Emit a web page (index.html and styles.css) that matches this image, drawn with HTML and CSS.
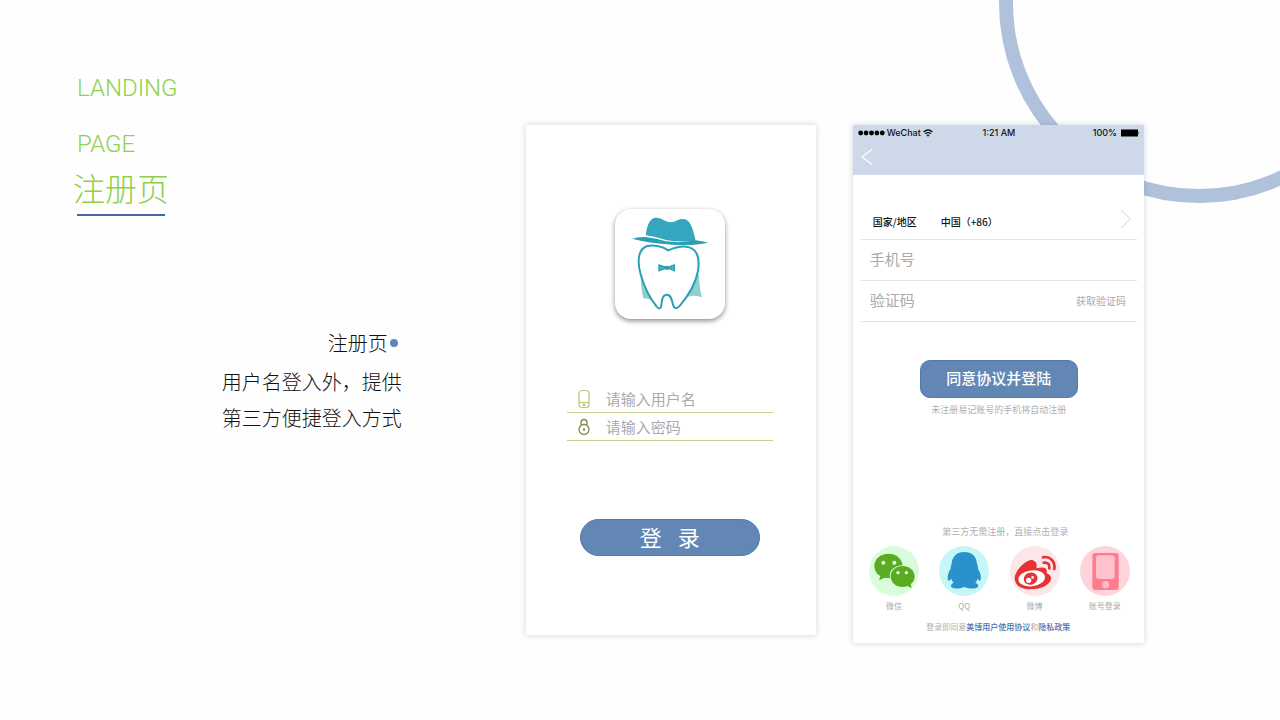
FILE: index.html
```html
<!DOCTYPE html>
<html lang="zh-CN">
<head>
    <meta charset="UTF-8">
    <meta name="viewport" content="width=device-width, initial-scale=1.0">
    <title>注册页</title>
    <link rel="stylesheet" href="styles.css">
</head>

<body>
    <div class="page">
        <div class="ring"></div>

        <section class="intro">
            <h1>LANDING<br>PAGE</h1>
            <h2>注册页</h2>
            <div class="desc">
                <h3>注册页<span class="dot"></span></h3>
                <p>用户名登入外，提供<br>第三方便捷登入方式</p>
            </div>
        </section>

        <main class="card login">
            <div class="logo">
                <svg viewBox="45 42 330 330" width="110" height="110" aria-hidden="true">
                    <path fill="#8fcfd0" d="M122 242C122 270 126 292 130 310Q144 309 154 316L176 338ZM296 236C298 265 300 286 306 307Q286 298 262 306L236 334Z"/>
                    <path fill="#fff" stroke="#2c9fb5" stroke-width="6" stroke-linejoin="round" d="M205 166C185 152 158 150 142 153C112 162 112 205 122 238C132 275 148 308 170 335Q182 348 184 330C186 312 188 299 201 299C214 299 216 318 220 332Q225 346 238 334C262 306 286 270 294 228C300 190 292 165 268 157C245 150 225 157 205 166Z"/>
                    <path fill="#34a7bf" d="M137 121C140 100 144 84 154 74C164 64 180 68 192 76Q212 88 232 76C246 69 260 71 268 82C278 97 282 117 287 137Q240 143 198 135Q165 124 137 121Z"/>
                    <path fill="#2c9fb5" d="M96 131Q115 125 136 126Q165 128 198 139Q245 145 287 136Q308 139 324 143Q280 153 218 149Q145 144 96 131Z"/>
                    <path fill="#2c9fb5" d="M175 207L195 214Q201 210 207 214L225 207V230L207 223Q201 227 195 223L175 230Z"/>
                    <path stroke="#8fcfd0" stroke-width="2" d="M182 214V224M190 216V222M211 216V222M218 214V224"/>
                </svg>
            </div>
            <form class="login-form">
                <label class="line">
                    <svg viewBox="0 0 14 20" width="14" height="20" fill="none" stroke="#bfc37c" stroke-width="1.2" aria-hidden="true">
                        <rect x="2" y="1.5" width="10" height="17" rx="3"/>
                        <path d="M2 13.5H12"/>
                        <circle cx="7" cy="16" r=".8"/>
                    </svg>
                    <input type="text" aria-label="用户名" placeholder="请输入用户名">
                </label>
                <label class="line">
                    <svg viewBox="0 0 14 20" width="14" height="20" fill="none" stroke="#85894f" stroke-width="1.3" aria-hidden="true">
                        <circle cx="7" cy="12.5" r="5"/>
                        <path d="M4 8.5V5.5A3 3 0 0 1 10 5.5V8.5"/>
                        <circle cx="7" cy="12.5" r=".6"/>
                    </svg>
                    <input type="password" aria-label="密码" placeholder="请输入密码">
                </label>
                <button type="button" class="login-btn">登&ensp;&nbsp;录</button>
            </form>
        </main>

        <section class="card register">
            <header>
                <div class="status">
                    <div class="carrier">
                        <svg viewBox="0 0 27 6" width="27" height="6" aria-hidden="true">
                            <circle cx="2.7" cy="3" r="2.4"/><circle cx="8.1" cy="3" r="2.4"/><circle cx="13.5" cy="3" r="2.4"/><circle cx="18.9" cy="3" r="2.4"/><circle cx="24.3" cy="3" r="2.4"/>
                        </svg>
                        <span>WeChat</span>
                        <svg viewBox="0 0 10 8" width="10" height="8" fill="none" stroke="#111" stroke-width="1.3" aria-hidden="true">
                            <path d="M.6 3Q5-1 9.4 3M2.2 4.8Q5 2.4 7.8 4.8"/>
                            <path fill="#111" stroke="none" d="M3.4 6Q5 4.8 6.6 6L5 7.8Z"/>
                        </svg>
                    </div>
                    <span class="time">1:21 AM</span>
                    <div class="battery">
                        <span>100%</span>
                        <svg viewBox="0 0 19 8" width="19" height="8" aria-hidden="true"><path d="M0 .5H17V7.5H0ZM17.6 2.6Q19 4 17.6 5.4Z"/></svg>
                    </div>
                </div>
                <a href="#" class="back" aria-label="返回">
                    <svg viewBox="0 0 12 16" width="12" height="16" fill="none" stroke="#fff" stroke-width="1.3"><path d="M11 .5L1 8L11 15.5"/></svg>
                </a>
            </header>
            <form class="register-form">
                <div class="row country">
                    <label for="country">国家/地区</label>
                    <select id="country">
                        <option>中国（+86）</option>
                    </select>
                    <svg viewBox="0 0 12 20" width="12" height="20" fill="none" stroke="#d4d4d4" aria-hidden="true"><path d="M1 1L10.5 10L1 19"/></svg>
                </div>
                <div class="row">
                    <input type="tel" aria-label="手机号" placeholder="手机号">
                </div>
                <div class="row">
                    <input type="text" aria-label="验证码" placeholder="验证码">
                    <button type="button" class="code-btn">获取验证码</button>
                </div>
                <button type="button" class="agree-btn">同意协议并登陆</button>
                <p class="note">未注册易记账号的手机将自动注册</p>
            </form>
            <p class="third-title">第三方无需注册，直接点击登录</p>
            <nav class="third">
                <a href="#">
                    <svg viewBox="40 78 150 150" width="50" height="50" aria-hidden="true">
                        <circle cx="115" cy="153" r="75" fill="#d9fddb"/>
                        <path fill="#5aab22" d="M99 101C74 101 56 117 56 138C56 151 63 162 74 168L70 181L87 173Q94 175 103 174C98 153 116 136 141 136C138 115 121 101 99 101Z"/>
                        <path fill="#5aab22" d="M141 138C120 138 105 151 105 169C105 188 121 201 141 201Q149 201 155 198L168 204L165 193C173 187 177 179 177 169C177 151 161 138 141 138Z"/>
                        <g fill="#e4fbe2"><circle cx="83" cy="128" r="6"/><circle cx="116" cy="128" r="6"/><circle cx="127" cy="158" r="5"/><circle cx="152" cy="158" r="5"/></g>
                    </svg>
                    <span>微信</span>
                </a>
                <a href="#">
                    <svg viewBox="252 78 150 150" width="50" height="50" aria-hidden="true">
                        <circle cx="327" cy="153" r="75" fill="#c5f6f8"/>
                        <path fill="#2992cb" d="M328 96C305 96 291 110 290 131Q286 139 287 146C279 158 276 170 279 181Q283 185 289 176Q291 184 296 188Q285 193 289 201C298 208 318 206 328 201C338 206 360 208 369 201Q372 192 361 188Q366 183 368 176Q374 186 377 180C379 168 376 157 369 146Q370 138 366 131C365 110 351 96 328 96Z"/>
                    </svg>
                    <span>QQ</span>
                </a>
                <a href="#">
                    <svg viewBox="29 78 150 150" width="50" height="50" aria-hidden="true">
                        <circle cx="104" cy="153" r="75" fill="#fde6e7"/>
                        <path fill="#e53234" d="M91 120C76 122 51 145 44 167C38 193 61 208 91 208C124 208 150 193 152 177Q153 165 139 160Q142 146 132 143Q122 141 108 145Q112 128 102 123Q98 119 91 120Z"/>
                        <ellipse cx="94" cy="175" rx="40" ry="24" fill="#fff" transform="rotate(-7 94 175)"/>
                        <ellipse cx="91" cy="176" rx="21" ry="18" fill="#e53234" transform="rotate(-15 91 176)"/>
                        <circle cx="85" cy="181" r="8" fill="#fff"/><circle cx="97" cy="172" r="4" fill="#fff"/>
                        <path fill="none" stroke="#e53234" stroke-width="8" stroke-linecap="round" d="M128 112C148 107 166 125 162 147M130 128Q149 126 147 145"/>
                    </svg>
                    <span>微博</span>
                </a>
                <a href="#">
                    <svg viewBox="239 75 150 150" width="50" height="50" aria-hidden="true">
                        <circle cx="314" cy="150" r="75" fill="#ffd3da"/>
                        <rect x="276" y="96" width="79" height="111" rx="9" fill="#ff7b8f"/>
                        <rect x="287" y="103" width="56" height="71" rx="9" fill="#ffc2cc"/>
                        <circle cx="316" cy="191" r="11" fill="#ffb9c4"/>
                    </svg>
                    <span>账号登录</span>
                </a>
            </nav>
            <p class="terms">登录即同意<a href="#">美博用户使用协议</a>和<a href="#">隐私政策</a></p>
        </section>
    </div>
</body>
</html>
```
FILE: styles.css
```css
* {
    box-sizing: border-box;
    font-family: 'Noto Sans CJK SC', sans-serif;
}
body {
    margin: 0;
    background-color: #fefefe;
}
h1, h2, h3, p {
    margin: 0;
    font-weight: 300;
}
a {
    text-decoration: none;
}
svg {
    display: block;
    flex-shrink: 0;
}
input, select, button {
    border: none;
    background: none;
    padding: 0;
    margin: 0;
    outline: none;
}
button {
    cursor: pointer;
}
.page {
    position: relative;
    overflow: hidden;
    display: grid;
    grid-template-columns: 490fr 288fr 292fr;
    align-items: start;
    column-gap: 37px;
    min-height: 100vh;
    padding: 60px 136px 60px 0;
}
.ring {
    position: absolute;
    top: -197px;
    right: -119px;
    width: 400px;
    height: 400px;
    border: 14px solid #afc1db;
    border-radius: 50%;
}

/* left column */
.intro {
    padding: 0 87px 0 73px;
}
.intro h1 {
    padding-left: 4px;
    font-family: Roboto, sans-serif;
    font-size: 24px;
    line-height: 56px;
    color: #8fd14a;
}
.intro h2 {
    width: 96px;
    font-size: 32px;
    line-height: 30px;
    color: #8fd14a;
}
.intro h2::after {
    content: "";
    display: block;
    height: 2px;
    margin: 12px 4px 0;
    background-color: #4169a8;
}
.desc {
    margin-top: 109px;
    font-size: 20px;
    line-height: 36px;
    text-align: right;
    color: #111;
}
.desc h3 {
    display: flex;
    align-items: center;
    justify-content: flex-end;
    gap: 2px;
    margin: 0 4px 3px 0;
    font-size: 20px;
}
.dot {
    width: 8px;
    height: 8px;
    border-radius: 50%;
    background-color: #5b87bd;
}

/* phone screens */
.card {
    position: relative;
    margin-top: 65px;
    background-color: #fff;
    box-shadow: 0 0 6px rgba(90, 110, 160, 0.3);
}
.login {
    display: flex;
    flex-direction: column;
    align-items: center;
    padding: 84px 43px 79px 41px;
}
.logo {
    border-radius: 16px;
    box-shadow: 0 2px 5px rgba(0, 0, 0, 0.45);
}
.login-form {
    display: flex;
    flex-direction: column;
    align-items: center;
    width: 100%;
    margin-top: 66px;
}
.line {
    display: flex;
    align-items: center;
    gap: 15px;
    width: 100%;
    height: 28px;
    padding-left: 10px;
    border-bottom: 1px solid #c8cd94;
}
.line input {
    flex: 1;
    min-width: 0;
    font-size: 15px;
    line-height: 20px;
}
input::placeholder {
    color: #aaa;
    opacity: 1;
}
.login-btn {
    width: 180px;
    height: 37px;
    margin-top: 78px;
    padding-bottom: 4px;
    border: 1px solid #4f7ab2;
    border-radius: 19px;
    background-color: #6287b5;
    color: #fff;
    font-size: 22px;
    line-height: 30px;
}

.register header {
    height: 50px;
    background-color: #cdd9e8;
}
.status {
    display: grid;
    grid-template-columns: 1fr auto 1fr;
    align-items: center;
    height: 16px;
    padding: 0 4px 0 5px;
    color: #111;
}
.status span {
    font-family: Inter, sans-serif;
    font-size: 9px;
    font-weight: 500;
    line-height: 16px;
}
.carrier, .battery {
    display: flex;
    align-items: center;
    gap: 2px;
}
.battery {
    justify-content: flex-end;
    gap: 4px;
}
.back {
    display: block;
    width: 28px;
    padding: 8px;
}
.register-form {
    display: flex;
    flex-direction: column;
    align-items: center;
    padding: 24px 7px 0 8px;
}
.row {
    display: flex;
    align-items: center;
    width: 100%;
    height: 41px;
    padding: 0 11px 2px 9px;
    border-bottom: 1px solid #e3e3e3;
}
.row input {
    flex: 1;
    min-width: 0;
    font-size: 15px;
    line-height: 20px;
}
.country {
    padding: 0 5px 0 12px;
    font-size: 10px;
    font-weight: 500;
    color: #111;
}
.country label, .country select {
    padding-top: 6px;
    line-height: 16px;
}
.country select {
    flex: 1;
    margin-left: 24px;
    appearance: none;
    font-size: 10px;
    font-weight: 500;
    color: #111;
}
.code-btn {
    font-size: 10px;
    color: #aaa;
}
.agree-btn {
    width: 158px;
    height: 38px;
    margin-top: 38px;
    padding-bottom: 4px;
    border: 1px solid #4f7ab2;
    border-radius: 10px;
    background-color: #6287b5;
    color: #fff;
    font-size: 15px;
    font-weight: 500;
}
.note, .third-title, .terms {
    font-size: 9px;
    line-height: 16px;
    text-align: center;
    font-weight: 400;
    color: #b0b0b0;
}
.note {
    margin-top: 4px;
}
.third-title {
    margin: 106px 0 6px 14px;
}
.third {
    display: grid;
    grid-template-columns: repeat(4, 1fr);
    padding: 0 4px 0 6px;
}
.third a {
    display: flex;
    flex-direction: column;
    align-items: center;
    gap: 2px;
    font-size: 8px;
    line-height: 16px;
    color: #aaa;
}
.terms {
    margin-top: 5px;
    padding-bottom: 8px;
    font-size: 8px;
}
.terms a {
    color: #4a72aa;
    font-weight: 500;
}
```
